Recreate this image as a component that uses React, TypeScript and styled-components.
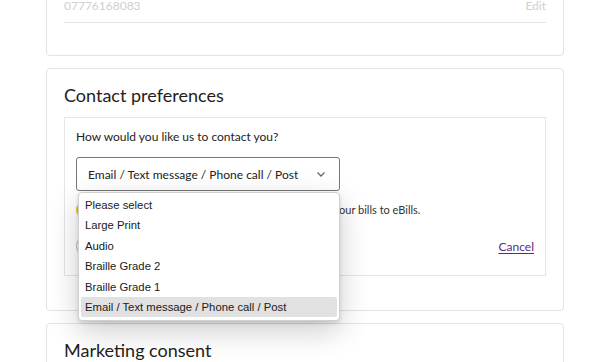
import styled, { createGlobalStyle } from 'styled-components';

const GlobalStyle = createGlobalStyle`
    body {
        margin: 0;
        background: #ffffff;
        font-family: Lato, "Noto Sans", sans-serif;
        color: #222222;
        overflow: hidden;
    }
`;

const Page = styled.div`
    width: 518px;
    margin-left: 46px;
    margin-top: -20px;
    display: flex;
    flex-direction: column;
    gap: 12px;
`;

const Card = styled.section<{ top?: number; bottom?: number }>`
    border: 1px solid #e3e3e3;
    border-radius: 4px;
    padding: ${({ top }) => top ?? 15}px 17px ${({ bottom }) => bottom ?? 34}px;
`;

const DetailRow = styled.div`
    display: flex;
    justify-content: space-between;
    font-size: 12px;
    line-height: 20px;
    color: #cfcfcf;
    padding-bottom: 6px;
    border-bottom: 1px solid #e2e2e2;
`;

const CardTitle = styled.h2`
    margin: 0;
    font-size: 18px;
    font-weight: 400;
    line-height: 24px;
    color: #1e1e1e;
`;

const FormBox = styled.div`
    margin-top: 10px;
    border: 1px solid #e6e6e6;
    padding: 10px 11px 18px;
`;

const Question = styled.p`
    margin: 0;
    font-size: 12px;
    line-height: 18px;
    color: #222222;
`;

const SelectWrap = styled.div`
    position: relative;
    width: 264px;
    margin-top: 11px;
`;

const SelectBox = styled.div`
    height: 34px;
    box-sizing: border-box;
    border: 1px solid #777777;
    border-radius: 3px;
    display: flex;
    align-items: center;
    justify-content: space-between;
    padding: 0 12px 0 11px;
    font-size: 12px;
    color: #222222;
`;

const Chevron = styled.svg`
    width: 12px;
    height: 12px;
`;

const OptionList = styled.ul`
    position: absolute;
    left: 2px;
    top: 35px;
    width: 262px;
    box-sizing: border-box;
    margin: 0;
    padding: 2px 2px 3px;
    list-style: none;
    background: #ffffff;
    border: 1px solid #cfcfcf;
    border-radius: 4px;
    box-shadow: 0 2px 4px rgba(0, 0, 0, 0.12), 0 10px 30px rgba(0, 0, 0, 0.2);
    z-index: 2;
`;

const Option = styled.li<{ selected?: boolean }>`
    height: 20.4px;
    line-height: 20.4px;
    padding-left: 4px;
    font-family: "Liberation Sans", Arial, sans-serif;
    font-size: 11.3px;
    color: #1a1a1a;
    background: ${({ selected }) => (selected ? '#e1e1e1' : 'transparent')};
    border-radius: 2px;
`;

const Notice = styled.div`
    margin-top: 10px;
    display: flex;
    align-items: center;
    gap: 8px;
    font-size: 11px;
    line-height: 18px;
    color: #333333;
`;

const NoticeIcon = styled.span`
    width: 16px;
    height: 16px;
    box-sizing: border-box;
    border: 2px solid #f2c300;
    border-radius: 50%;
    flex-shrink: 0;
`;

const Actions = styled.div`
    margin-top: 16px;
    display: flex;
    align-items: center;
    justify-content: space-between;
    height: 22px;
`;

const SaveButton = styled.button`
    height: 22px;
    padding: 0 20px;
    border: 1px solid #bbbbbb;
    border-radius: 11px;
    background: #ffffff;
    font-family: inherit;
    font-size: 12px;
`;

const CancelLink = styled.a`
    font-size: 12px;
    color: #5b2a86;
    text-decoration: underline;
    text-underline-offset: 2px;
`;

const options = ['Please select', 'Large Print', 'Audio', 'Braille Grade 2', 'Braille Grade 1', 'Email / Text message / Phone call / Post'];

export default function App() {
    const value = 'Email / Text message / Phone call / Post';

    return (
        <>
            <GlobalStyle />
            <Page>
                <Card top={15} bottom={32}>
                    <DetailRow>
                        <span>07776168083</span>
                        <span>Edit</span>
                    </DetailRow>
                </Card>
                <Card top={14}>
                    <CardTitle>Contact preferences</CardTitle>
                    <FormBox>
                        <Question>How would you like us to contact you?</Question>
                        <SelectWrap>
                            <SelectBox>
                                <span>{value}</span>
                                <Chevron viewBox="0 0 12 12" fill="none" stroke="#666" strokeWidth="1.3">
                                    <path d="M2.5 4.5 6 8l3.5-3.5" />
                                </Chevron>
                            </SelectBox>
                            <OptionList>
                                {options.map((o) => (
                                    <Option key={o} selected={o === value}>
                                        {o}
                                    </Option>
                                ))}
                            </OptionList>
                        </SelectWrap>
                        <Notice>
                            <NoticeIcon />
                            <span>By choosing this option we will also switch all of your bills to eBills.</span>
                        </Notice>
                        <Actions>
                            <SaveButton>Save</SaveButton>
                            <CancelLink>Cancel</CancelLink>
                        </Actions>
                    </FormBox>
                </Card>
                <Card top={14}>
                    <CardTitle>Marketing consent</CardTitle>
                </Card>
            </Page>
        </>
    );
}
